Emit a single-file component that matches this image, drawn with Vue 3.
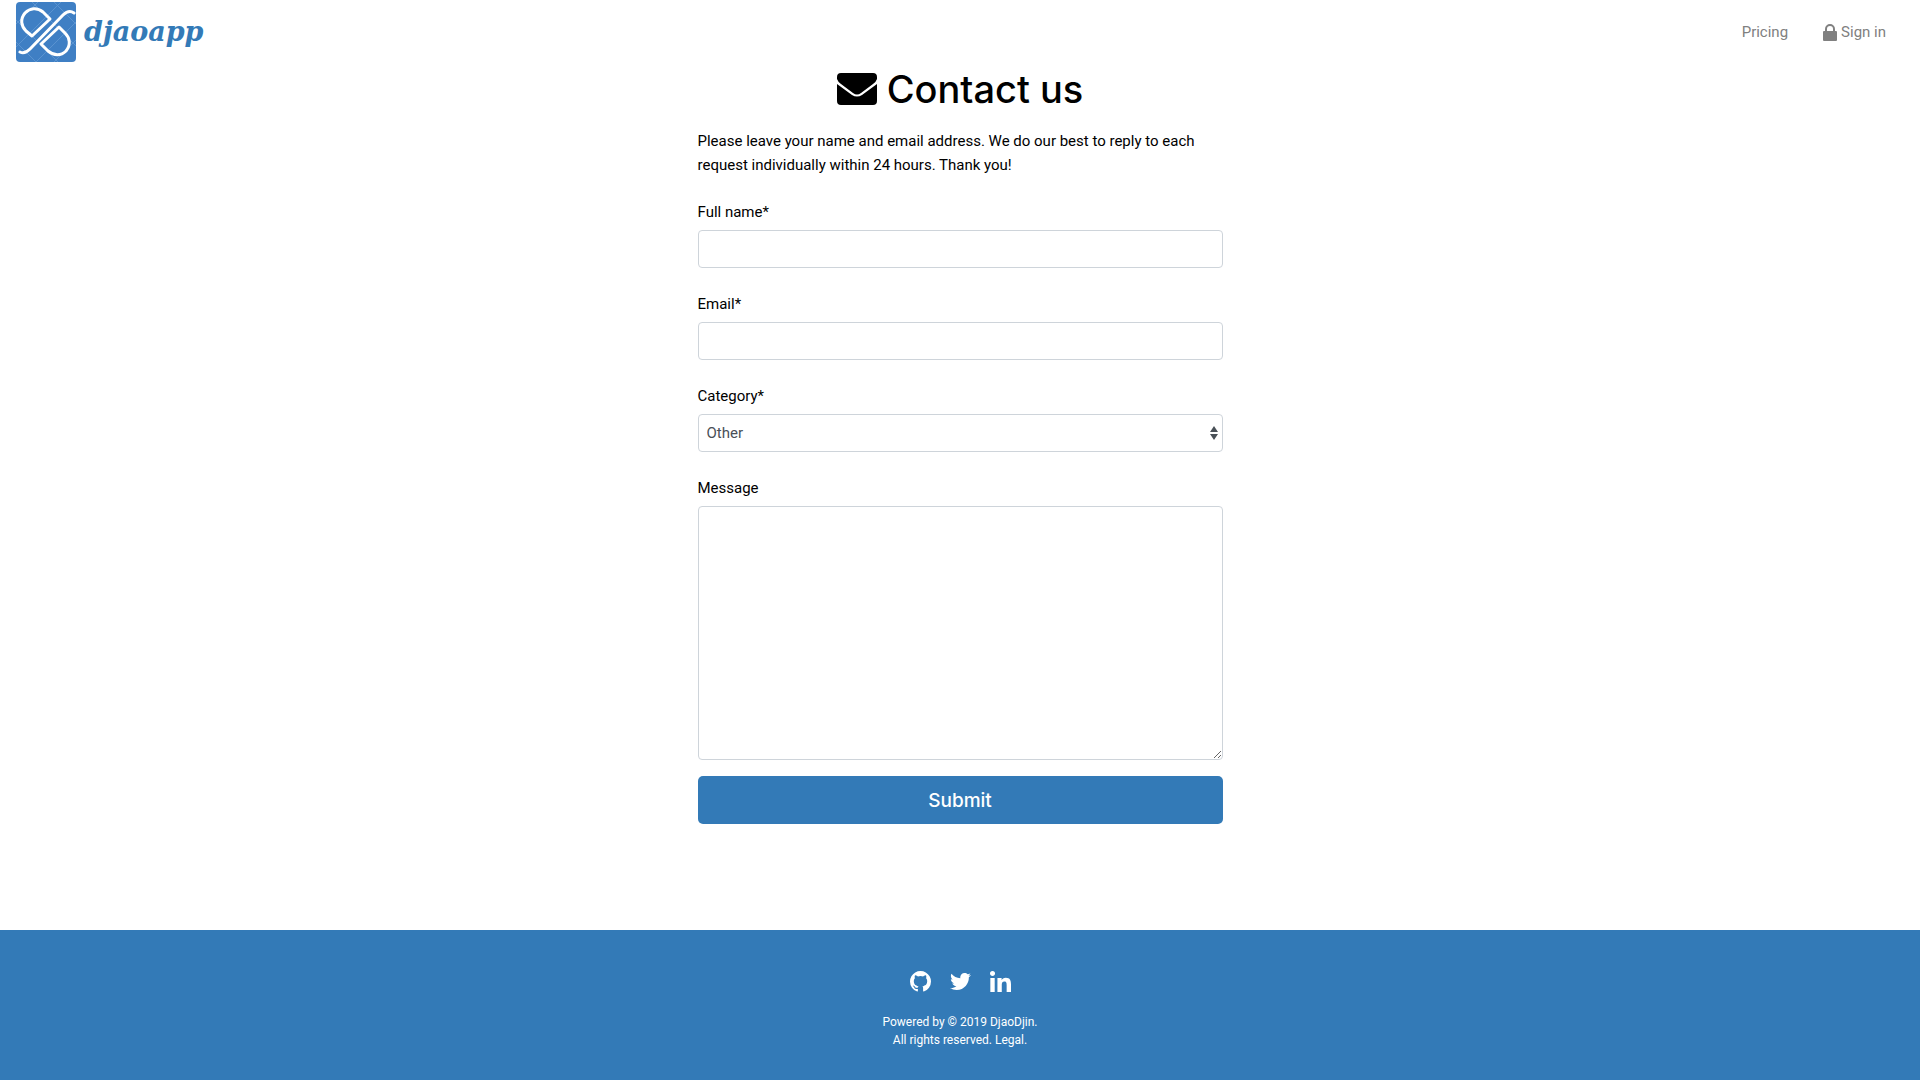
<template>
  <div class="page">
    <header class="navbar">
      <a class="brand" href="#">
        <svg class="brand-logo" viewBox="0 0 60 60" aria-hidden="true">
          <rect width="60" height="60" rx="4" fill="#3f7fc4" />
          <g class="grid">
            <path d="M0 22 22 0M0 45 45 0M20 60 60 20M38 60 60 38M0 18 42 60M16 0 60 44M38 0 60 22M0 40 20 60" />
          </g>
          <g class="mark">
            <path d="M4 50C8 52 11 50 14 47L47 13C50 10 54 8 58 11" />
            <path d="M16 34L34 17L27 10C21 5 14 6 9 11C4 17 5 24 10 29Z" />
            <path d="M43 25L25 42L32 49C38 54 45 54 50 49C55 43 54 36 49 31Z" />
          </g>
        </svg>
        <span class="brand-name">djaoapp</span>
      </a>
      <nav class="nav-links">
        <a href="#">Pricing</a>
        <a href="#">
          <svg class="lock" viewBox="0 0 14 17" aria-hidden="true">
            <rect y="7" width="14" height="10" rx="1" fill="currentColor" />
            <path d="M3 8V5a4 4 0 0 1 8 0v3" fill="none" stroke="currentColor" stroke-width="2" />
          </svg>
          Sign in
        </a>
      </nav>
    </header>

    <main class="contact">
      <h1>
        <svg class="envelope" viewBox="0 0 40 32" aria-hidden="true">
          <path d="M4 0H36Q40 0 40 4V6Q39 9 36 11L24 20Q20 23 16 20L4 11Q1 9 0 6V4Q0 0 4 0Z" />
          <path d="M0 11L15 22Q20 25 25 22L40 11V28Q40 32 36 32H4Q0 32 0 28Z" />
        </svg>
        Contact us
      </h1>
      <p class="intro">
        Please leave your name and email address. We do our best to reply to
        each request individually within 24 hours. Thank you!
      </p>
      <form @submit.prevent>
        <div class="form-group">
          <label for="full_name">Full name*</label>
          <input id="full_name" v-model="form.fullName" class="form-control" type="text" />
        </div>
        <div class="form-group">
          <label for="email">Email*</label>
          <input id="email" v-model="form.email" class="form-control" type="email" />
        </div>
        <div class="form-group">
          <label for="category">Category*</label>
          <select id="category" v-model="form.category" class="form-control custom-select">
            <option value="other">Other</option>
          </select>
        </div>
        <div class="form-group">
          <label for="message">Message</label>
          <textarea id="message" v-model="form.message" class="form-control" rows="10"></textarea>
        </div>
        <button class="btn" type="submit">Submit</button>
      </form>
    </main>

    <footer class="footer">
      <div class="social">
        <a v-for="item in social" :key="item.name" href="#" :aria-label="item.name">
          <svg :viewBox="item.viewBox" aria-hidden="true">
            <path :d="item.path" fill="currentColor" />
          </svg>
        </a>
      </div>
      <p>
        Powered by © 2019 <a href="#">DjaoDjin</a>.<br />
        All rights reserved. <a href="#">Legal</a>.
      </p>
    </footer>
  </div>
</template>

<script setup>
import { reactive } from "vue";

const form = reactive({
  fullName: "",
  email: "",
  category: "other",
  message: "",
});

const social = [
  {
    name: "GitHub",
    viewBox: "128 128 1536 1536",
    path: "M896 128q209 0 385.5 103t279.5 279.5 103 385.5q0 251-146.5 451.5t-378.5 277.5q-27 5-40-7t-13-30q0-3 .5-76.5t.5-134.5q0-97-52-142 57-6 102.5-18t94-39 81-66.5 53-105 20.5-150.5q0-119-79-206 37-91-8-204-28-9-81 11t-92 44l-38 24q-93-26-192-26t-192 26q-16-11-42.5-27t-83.5-38.5-85-13.5q-45 113-8 204-79 87-79 206 0 85 20.5 150t52.5 105 80.5 67 94 39 102.5 18q-39 36-49 103-21 10-45 15t-57 5-65.5-21.5-55.5-62.5q-19-32-48.5-52t-49.5-24l-20-3q-21 0-29 4.5t-5 11.5 9 14 13 12l7 5q22 10 43.5 38t31.5 51l10 23q13 38 44 61.5t67 30 69.5 7 55.5-3.5l23-4q0 38 .5 88.5t.5 54.5q0 18-13 30t-40 7q-232-77-378.5-277.5t-146.5-451.5q0-209 103-385.5t279.5-279.5 385.5-103z",
  },
  {
    name: "Twitter",
    viewBox: "0 0 512 512",
    path: "M459.37 151.716c.325 4.548.325 9.097.325 13.645 0 138.72-105.583 298.558-298.558 298.558-59.452 0-114.68-17.219-161.137-47.106 8.447.974 16.568 1.299 25.34 1.299 49.055 0 94.213-16.568 130.274-44.832-46.132-.975-84.792-31.188-98.112-72.772 6.498.974 12.995 1.624 19.818 1.624 9.421 0 18.843-1.3 27.614-3.573-48.081-9.747-84.143-51.98-84.143-102.985v-1.299c13.969 7.797 30.214 12.67 47.431 13.319-28.264-18.843-46.781-51.005-46.781-87.391 0-19.492 5.197-37.36 14.294-52.954 51.655 63.675 129.3 105.258 216.365 109.807-1.624-7.797-2.599-15.918-2.599-24.04 0-57.828 46.782-104.934 104.934-104.934 30.213 0 57.502 12.67 76.67 33.137 23.715-4.548 46.456-13.32 66.599-25.34-7.798 24.366-24.366 44.833-46.132 57.827 21.117-2.273 41.584-8.122 60.426-16.243-14.292 20.791-32.161 39.308-52.628 54.253z",
  },
  {
    name: "LinkedIn",
    viewBox: "0 0 448 448",
    path: "M100.28 448H7.4V148.9h92.88zM53.79 108.1C24.09 108.1 0 83.5 0 53.8a53.79 53.79 0 0 1 107.58 0c0 29.7-24.1 54.3-53.79 54.3zM447.9 448h-92.68V302.4c0-34.7-.7-79.2-48.29-79.2-48.29 0-55.69 37.7-55.69 76.7V448h-92.78V148.9h89.08v40.8h1.3c12.4-23.5 42.69-48.3 87.88-48.3 94 0 111.28 61.9 111.28 142.3V448z",
  },
];
</script>

<style>
body {
  margin: 0;
  background: #fff;
}
</style>

<style scoped>
* {
  box-sizing: border-box;
}

.page {
  display: flex;
  flex-direction: column;
  min-height: 100vh;
  font-family: Roboto, "Liberation Sans", sans-serif;
  font-size: 15px;
  line-height: 24px;
  color: #000;
}

a {
  color: inherit;
  text-decoration: none;
}

.navbar {
  display: flex;
  align-items: center;
  justify-content: space-between;
  padding: 2px 34px 2px 16px;
}

.brand {
  display: flex;
  align-items: center;
  gap: 8px;
}

.brand-logo {
  width: 60px;
  height: 60px;
}

.grid {
  fill: none;
  stroke: #5a93d0;
  stroke-width: 1;
}

.mark {
  fill: none;
  stroke: #fff;
  stroke-width: 3;
  stroke-linecap: round;
  stroke-linejoin: round;
}

.brand-name {
  font-family: "DejaVu Serif", serif;
  font-size: 27px;
  font-weight: 700;
  font-style: italic;
  color: #337ab7;
}

.nav-links {
  display: flex;
  gap: 35px;
  color: #808080;
}

.nav-links a {
  display: flex;
  align-items: center;
  gap: 4px;
}

.lock {
  width: 14px;
  height: 17px;
}

.contact {
  width: 100%;
  max-width: 525px;
  margin: 0 auto;
}

h1 {
  display: flex;
  align-items: center;
  justify-content: center;
  gap: 10px;
  margin: 0 0 16px;
  padding-top: 1px;
  font-family: Inter, sans-serif;
  font-size: 38px;
  font-weight: 500;
  line-height: 48px;
}

.envelope {
  width: 40px;
  height: 32px;
}

.intro {
  margin: 0 0 23px;
}

.form-group {
  margin-bottom: 24px;
}

.form-group:last-of-type {
  margin-bottom: 16px;
}

label {
  display: block;
  margin-bottom: 6px;
}

.form-control {
  display: block;
  width: 100%;
  height: 38px;
  padding: 6px 8px;
  border: 1px solid #ced4da;
  border-radius: 4px;
  background: #fff;
  font: inherit;
  color: #495057;
}

textarea.form-control {
  height: auto;
  resize: vertical;
}

.custom-select {
  appearance: none;
  background: #fff url("data:image/svg+xml,%3Csvg xmlns='http://www.w3.org/2000/svg' viewBox='0 0 8 14'%3E%3Cpath fill='%23495057' d='M4 0L0 6h8zM4 14L0 8h8z'/%3E%3C/svg%3E") no-repeat right 4px center / 8px 14px;
}

.btn {
  display: block;
  width: 100%;
  height: 48px;
  border: 0;
  border-radius: 5px;
  background: #337ab7;
  font-family: Inter, sans-serif;
  font-size: 19px;
  font-weight: 500;
  color: #fff;
}

.footer {
  margin-top: auto;
  padding: 41px 16px 31px;
  background: #337ab7;
  font-size: 12px;
  line-height: 18px;
  text-align: center;
  color: #fff;
}

.social {
  display: flex;
  justify-content: center;
  gap: 19px;
  margin-bottom: 21px;
}

.social svg {
  display: block;
  width: 21px;
  height: 21px;
}

.footer p {
  margin: 0;
}
</style>
